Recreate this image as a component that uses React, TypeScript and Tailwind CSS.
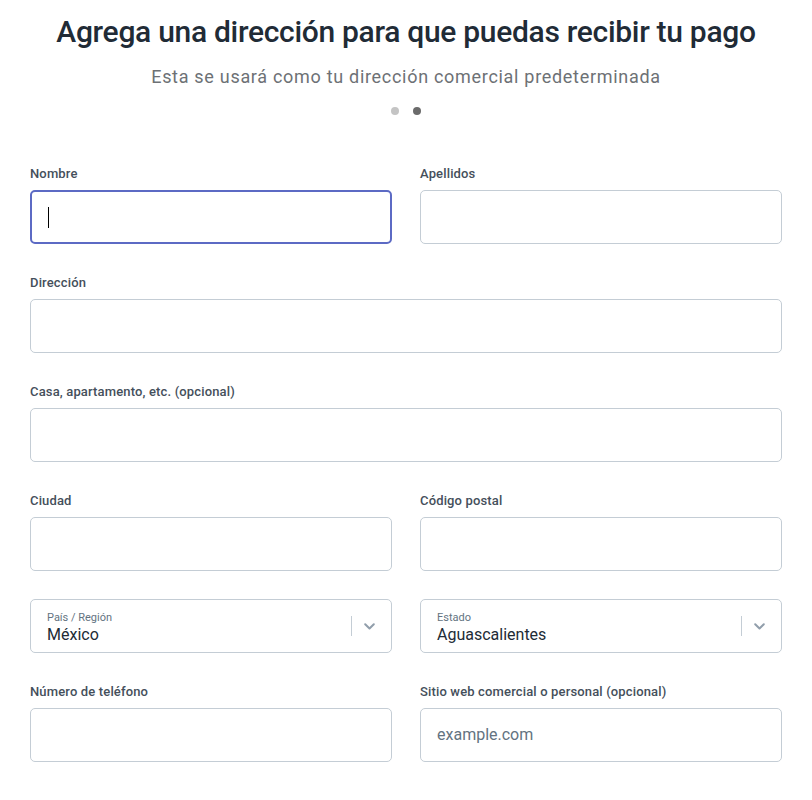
import React from "react";

const font = { fontFamily: "Roboto, 'Liberation Sans', sans-serif" };

function Label({ children }: { children: React.ReactNode }) {
  return (
    <div className="h-5 mb-[6px] mt-px text-[13px] leading-5 font-medium text-[#454f5b] tracking-[0.15px]">
      {children}
    </div>
  );
}

function TextInput({ focused, placeholder }: { focused?: boolean; placeholder?: string }) {
  return (
    <div
      className={
        "h-[54px] rounded-[5px] bg-white flex items-center px-4 " +
        (focused ? "border-2 border-[#5c6ac4]" : "border border-[#c4cdd5]")
      }
    >
      {focused && <div className="w-px h-[21px] bg-black" />}
      {placeholder && <span className="text-[16px] text-[#637381]">{placeholder}</span>}
    </div>
  );
}

function Field({ label, focused, placeholder }: { label: string; focused?: boolean; placeholder?: string }) {
  return (
    <div className="flex flex-col">
      <Label>{label}</Label>
      <TextInput focused={focused} placeholder={placeholder} />
    </div>
  );
}

function Select({ label, value }: { label: string; value: string }) {
  return (
    <div className="h-[54px] rounded-[5px] border border-[#c4cdd5] bg-white flex items-center pl-4 pr-[16px]">
      <div className="flex-1 flex flex-col leading-none mt-[3px]">
        <span className="text-[11px] leading-[14px] text-[#637381]">{label}</span>
        <span className="text-[16px] leading-[20px] text-[#212b36]">{value}</span>
      </div>
      <div className="w-px h-[20px] bg-[#c4cdd5] mr-[12px]" />
      <svg width="11" height="7" viewBox="0 0 11 7" className="text-[#919eab]">
        <path d="M1.2 1.2 L5.5 5.5 L9.8 1.2" stroke="currentColor" strokeWidth="2" fill="none" strokeLinecap="round" strokeLinejoin="round" />
      </svg>
    </div>
  );
}

export default function App() {
  return (
    <div className="w-[812px] h-[800px] bg-white" style={font}>
      <div className="px-[30px] pt-[13px]">
        <h1 className="text-center text-[30px] leading-[38px] font-medium text-[#212b36] tracking-[-0.3px]">
          Agrega una dirección para que puedas recibir tu pago
        </h1>
        <p className="text-center text-[18px] leading-6 text-[#6d7175] mt-[14px] tracking-[0.7px]">
          Esta se usará como tu dirección comercial predeterminada
        </p>
        <div className="flex justify-center gap-[14px] mt-[18px]">
          <div className="w-2 h-2 rounded-full bg-[#c4c4c4]" />
          <div className="w-2 h-2 rounded-full bg-[#6b6b6b]" />
        </div>
        <div className="mt-[48px] flex flex-col gap-[28px]">
          <div className="grid grid-cols-2 gap-[28px]">
            <Field label="Nombre" focused />
            <Field label="Apellidos" />
          </div>
          <Field label="Dirección" />
          <Field label="Casa, apartamento, etc. (opcional)" />
          <div className="grid grid-cols-2 gap-[28px]">
            <Field label="Ciudad" />
            <Field label="Código postal" />
          </div>
          <div className="grid grid-cols-2 gap-[28px]">
            <Select label="País / Región" value="México" />
            <Select label="Estado" value="Aguascalientes" />
          </div>
          <div className="grid grid-cols-2 gap-[28px]">
            <Field label="Número de teléfono" />
            <Field label="Sitio web comercial o personal (opcional)" placeholder="example.com" />
          </div>
        </div>
      </div>
    </div>
  );
}
